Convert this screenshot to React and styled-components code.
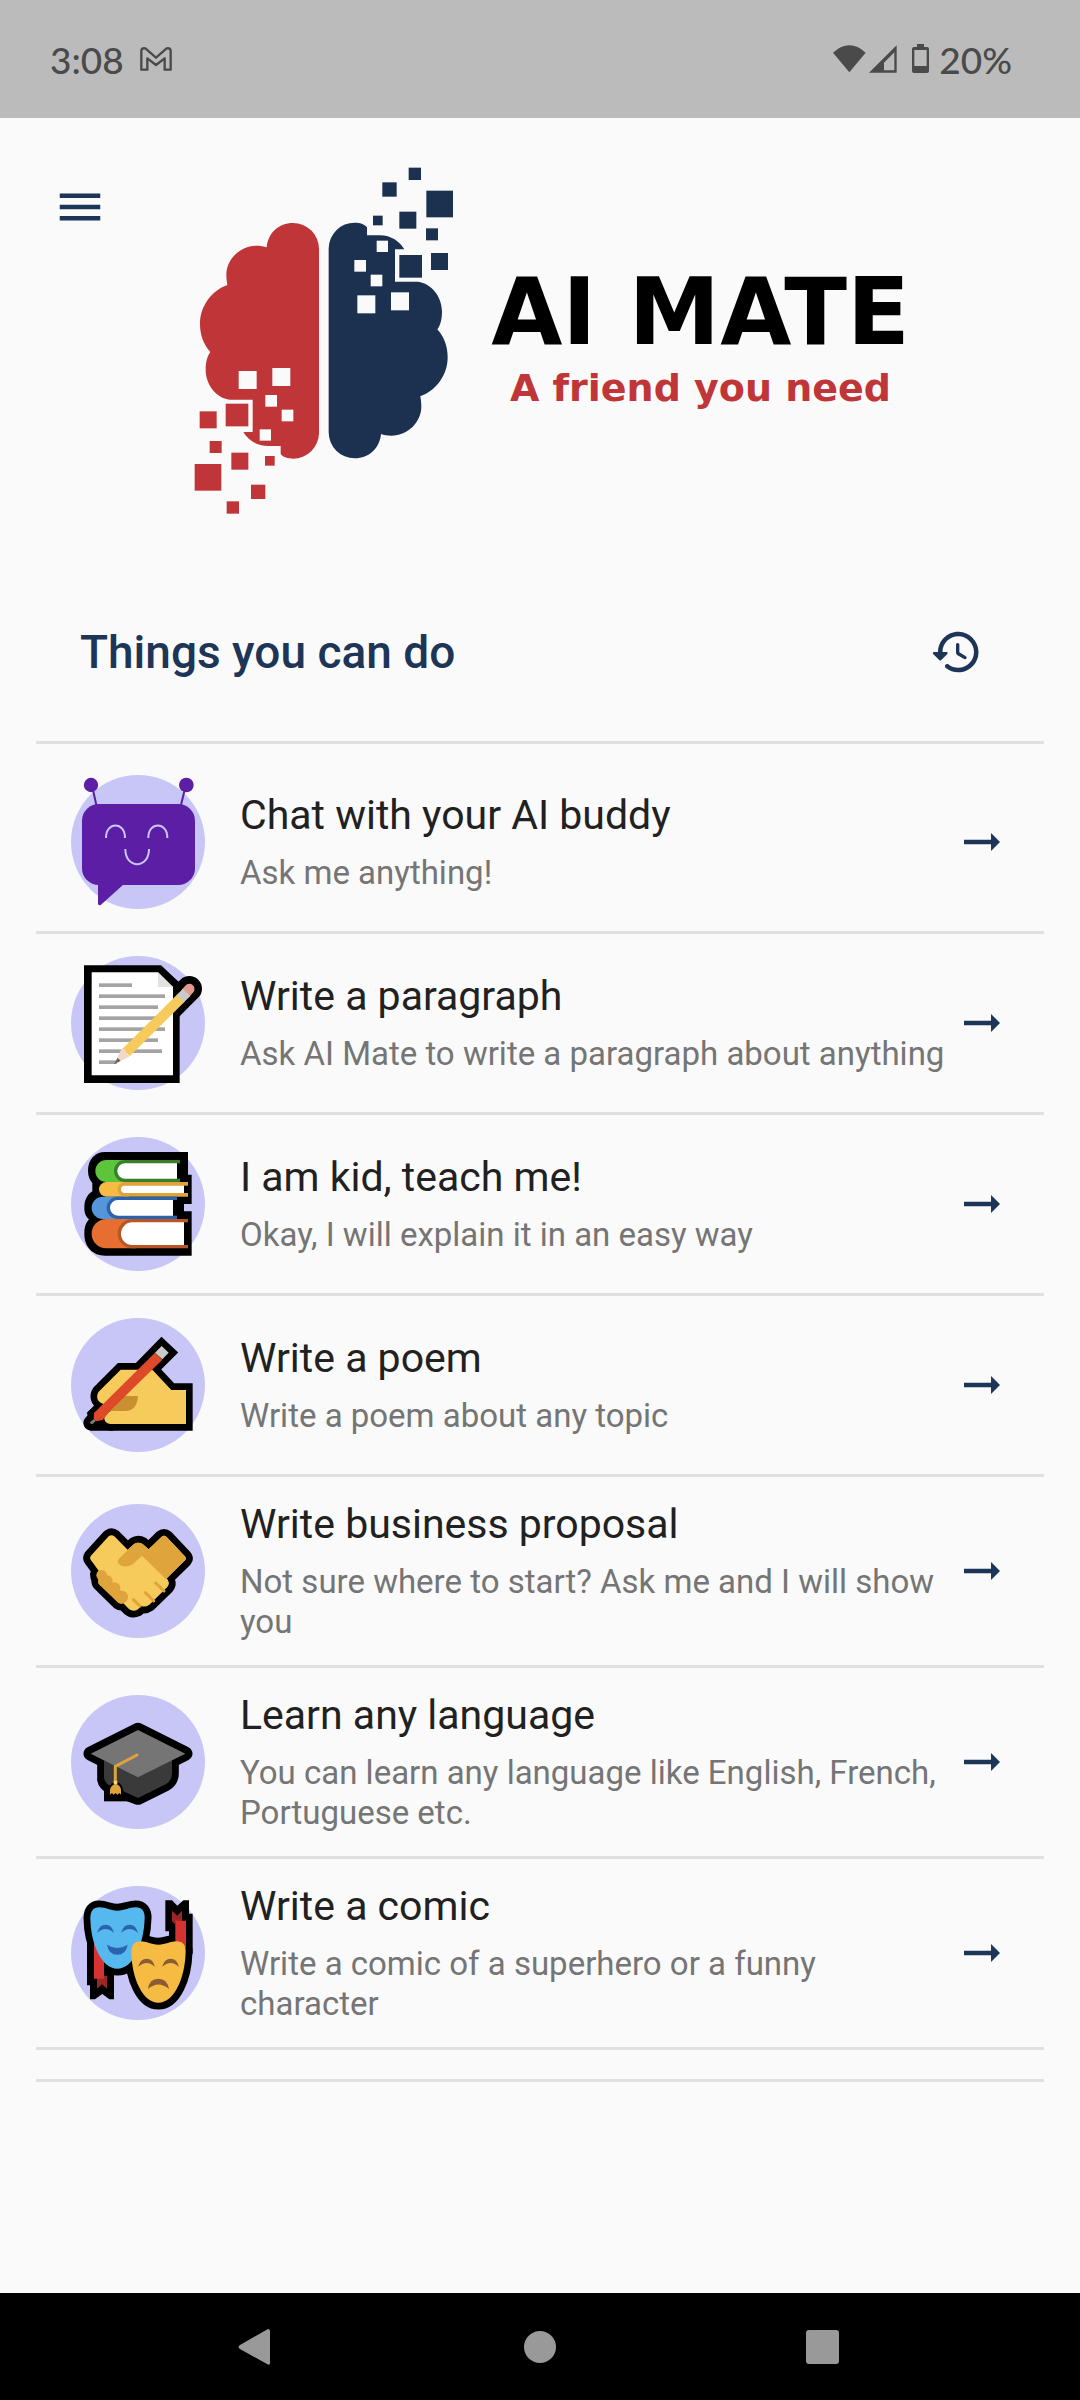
import React from "react";
import styled, { createGlobalStyle } from "styled-components";

const NAVY = "#1d3557";
const LOGO_NAVY = "#1c304f";
const LOGO_RED = "#c03537";

const GlobalStyle = createGlobalStyle`
  *, *::before, *::after { box-sizing: border-box; }
  body {
    margin: 0;
    background: #fafafa;
    font-family: Roboto, "Liberation Sans", sans-serif;
  }
  button {
    border: 0;
    padding: 0;
    background: none;
    color: inherit;
    font: inherit;
    cursor: pointer;
  }
  svg { display: block; flex: none; }
`;

const Screen = styled.div`
  display: flex;
  flex-direction: column;
  min-height: 100vh;
`;

const StatusBar = styled.div`
  display: flex;
  justify-content: space-between;
  align-items: center;
  height: 118px;
  padding: 0 68px 0 50px;
  background: #bbbbbb;
  color: #4a4a4a;
  font-family: Lato, "Liberation Sans", sans-serif;
  font-size: 37px;
  font-weight: 500;
`;

const StatusGroup = styled.div`
  display: flex;
  align-items: center;
  gap: ${(p) => p.$gap}px;
`;

const Main = styled.main`
  flex: 1;
`;

const Header = styled.header`
  display: flex;
  align-items: flex-start;
  padding: 47px 84px 0 53px;
`;

const IconButton = styled.button`
  display: flex;
  color: ${NAVY};
`;

const MenuButton = styled(IconButton)`
  margin-top: 15px;
`;

const Logo = styled.div`
  flex: 1;
  display: flex;
  justify-content: center;
  align-items: center;
  gap: 36px;
`;

const Wordmark = styled.div`
  display: flex;
  flex-direction: column;
  align-items: center;
  padding-bottom: 12px;
  white-space: nowrap;
`;

const BrandName = styled.h1`
  margin: 0;
  font: 700 92px/107px "DejaVu Sans", sans-serif;
  color: #000;
`;

const Tagline = styled.p`
  margin: 0;
  font: 700 38px/44px "DejaVu Sans", sans-serif;
  color: ${LOGO_RED};
`;

const SectionHead = styled.div`
  display: flex;
  justify-content: space-between;
  align-items: center;
  margin: 0 36px;
  padding: 108px 61px 60px 44px;
  border-bottom: 3px solid #e0e0e0;
`;

const SectionTitle = styled.h2`
  margin: 0;
  font-size: 46px;
  line-height: 58px;
  font-weight: 500;
  color: ${NAVY};
`;

const List = styled.ul`
  list-style: none;
  margin: 0 36px;
  padding: 9px 0 29px;
  border-bottom: 3px solid #e0e0e0;
`;

const Item = styled.li`
  border-bottom: 3px solid #e0e0e0;
`;

const ItemButton = styled.button`
  display: flex;
  align-items: center;
  width: 100%;
  padding: 22px 35px;
  text-align: left;
  color: ${NAVY};
`;

const ItemText = styled.span`
  flex: 1;
  min-width: 0;
  display: flex;
  flex-direction: column;
  gap: 14px;
  padding: 1px 0 1px 35px;
`;

const ItemTitle = styled.span`
  font-size: 41px;
  line-height: 48px;
  color: #212121;
`;

const ItemSubtitle = styled.span`
  font-size: 33px;
  line-height: 40px;
  color: #757575;
`;

const NavBar = styled.nav`
  display: flex;
  justify-content: center;
  align-items: center;
  gap: 248px;
  height: 107px;
  background: #000;
  color: #999;
`;

const NavButton = styled.button`
  display: flex;
  color: inherit;
`;

const NAVY_SQUARES = [
  [707, 53, 37], [628, 97, 43], [760, 122, 80], [600, 197, 29],
  [679, 185, 51], [759, 235, 36], [679, 315, 68], [774, 309, 51],
];
const CUTOUTS = [
  [611, 272, 34], [544, 330, 35], [593, 374, 35], [553, 436, 54], [654, 427, 54],
];

function BrainHalf({ color, transform }) {
  return (
    <g transform={transform}>
      <path
        fill={color}
        d="M467 295A78 78 0 0 1 545 218C560 218 574 222 582 232V256H620C655 256 680 275 694 298H666V395H735C775 400 807 440 807 485C807 505 803 525 793 538C814 562 824 590 824 622C824 675 790 722 742 739C744 750 745 760 745 770C745 815 705 857 655 857C643 857 632 855 624 852C620 895 588 925 545 925A78 78 0 0 1 467 847Z"
      />
      {NAVY_SQUARES.map(([x, y, s]) => (
        <rect key={`${x}-${y}`} x={x} y={y} width={s} height={s} fill={color} />
      ))}
      {CUTOUTS.map(([x, y, s]) => (
        <rect key={`${x}-${y}`} x={x} y={y} width={s} height={s} fill="#fafafa" />
      ))}
    </g>
  );
}

function BrainLogo() {
  return (
    <svg width="262" height="350" viewBox="60 45 786 1050" aria-hidden="true">
      <BrainHalf color={LOGO_NAVY} />
      <BrainHalf color={LOGO_RED} transform="rotate(180 452.5 572)" />
    </svg>
  );
}

function Avatar({ top, children }) {
  return (
    <svg width="134" height="134" viewBox={`63 ${top} 402 402`} aria-hidden="true">
      <circle cx="264" cy={top + 201} r="201" fill="#c7c6f7" />
      {children}
    </svg>
  );
}

function RobotIcon() {
  return (
    <Avatar top={75}>
      <g fill="#5c1ea4">
        <circle cx="123" cy="105" r="21.5" />
        <circle cx="409" cy="105" r="22" />
        <rect x="96" y="162" width="339" height="243" rx="50" />
        <path d="M144 395V462Q147 468 153 464L222 402Z" />
      </g>
      <path d="M129 120L139 165M404 120L393 165" stroke="#5c1ea4" strokeWidth="6" fill="none" />
      <path
        d="M168 264C167 214 226 214 225 264M295 264C294 214 353 214 352 264M226 297C226 358 297 358 297 297"
        stroke="#c7c6f7"
        strokeWidth="6"
        fill="none"
      />
    </Avatar>
  );
}

const PAPER_LINES = [246, 345, 324, 318, 345, 324, 336, 200];

function PaperIcon() {
  return (
    <Avatar top={620}>
      <path d="M102 648H333L389 700V1001H102Z" />
      <path d="M418 718L362 774" stroke="#000" strokeWidth="76" strokeLinecap="round" />
      <path d="M125 669H324L369 713V978H125Z" fill="#fff" />
      <path d="M324 669L369 713H324Z" fill="#e2e2e2" />
      {PAPER_LINES.map((end, i) => (
        <rect key={i} x="147" y={702 + i * 33} width={end - 147} height="11" fill="#a3a3a3" />
      ))}
      <path d="M408 730L418 719" stroke="#e39a8d" strokeWidth="31" strokeLinecap="round" />
      <path d="M228 910L393 746" stroke="#f6ca5b" strokeWidth="31" />
      <path d="M391 748L410 729" stroke="#cacaca" strokeWidth="31" />
      <path d="M216 897L226 902L229 912L238 922L212 935L201 925Z" fill="#f3d8c9" />
      <path d="M203 925L212 935L192 945Z" fill="#666" />
    </Avatar>
  );
}

function Book({ x, y, h, spine, end, light, dark, band, inset }) {
  const r = h / 2;
  const ph = h - band * 2;
  const pr = ph / 2;
  return (
    <>
      <path d={`M${x + r} ${y}H${spine + r + 12}V${y + h}H${x + r}A${r} ${r} 0 0 1 ${x + r} ${y}Z`} fill={light} />
      <path d={`M${spine + r} ${y}H${end}V${y + h}H${spine + r}A${r} ${r} 0 0 1 ${spine + r} ${y}Z`} fill={dark} />
      <path d={`M${end - inset} ${y + band}H${end}V${y + h - band}H${end - inset}Z`} />
      <path
        d={`M${spine + 10 + pr} ${y + band}H${end - inset}V${y + h - band}H${spine + 10 + pr}A${pr} ${pr} 0 0 1 ${spine + 10 + pr} ${y + band}Z`}
        fill="#fff"
      />
    </>
  );
}

function BooksIcon() {
  return (
    <Avatar top={84}>
      <path d="M165 129C135 129 114 152 114 185C114 202 120 214 127 222V247C110 258 103 275 103 296C103 312 107 322 117 331C107 342 103 355 103 375C103 415 130 440 165 440H425V307H402V285H425V197H414V129Z" />
      <Book x={136} y={153} h={66} spine={192} end={390} band={10} inset={9} light="#5dc43b" dark="#397f28" />
      <Book x={147} y={219} h={44} spine={203} end={414} band={11} inset={12} light="#f6bb42" dark="#dfa33b" />
      <Book x={125} y={263} h={67} spine={170} end={381} band={10} inset={12} light="#5595d9" dark="#2b63ae" />
      <Book x={125} y={330} h={88} spine={203} end={414} band={10} inset={12} light="#e76e31" dark="#b95626" />
    </Avatar>
  );
}

function WritingIcon() {
  const hand =
    "M212 782H307L364 843H408V945H182C155 943 155 908 182 906L158 884C140 878 138 860 146 848Z";
  return (
    <Avatar top={627}>
      <g stroke="#000" strokeWidth="40">
        <path d={hand} />
        <path d="M335 711L356 731L180 906L150 900Z" />
      </g>
      <path d="M122 965H190V885H140L112 910V920Q100 930 100 943Q102 963 122 965Z" />
      <path d={hand} fill="#f6ca5b" />
      <path d="M205 861H264Q262 905 225 906H182L160 890Z" fill="#c98f31" />
      <path d="M158 884L136 905L132 950H170Q158 930 166 915L182 906Z" />
      <path d="M315 731L337 752L180 906L158 933L138 937L131 930L132 912Z" fill="#dd4a2a" />
      <path d="M335 711L356 731L337 751L315 731Z" fill="#cacaca" />
      <path d="M120 939L132 930L137 936L128 945Q120 946 120 939Z" fill="#7a7a7a" />
    </Avatar>
  );
}

function HandshakeIcon() {
  const shape =
    "M176 173Q185 167 193 173L233 213L252 196Q264 188 278 196L296 212L334 175Q342 168 350 175L406 234Q410 239 406 244L350 299Q362 312 352 325L298 378Q285 387 275 382L262 393Q248 400 236 390L220 374Q212 377 205 372L147 315Q143 308 145 300Q136 288 146 276L122 243Q118 238 122 232Z";
  return (
    <Avatar top={76}>
      <path d={shape} stroke="#000" strokeWidth="41" strokeLinejoin="round" />
      <path d={shape} fill="#f6ca5b" />
      <path
        d="M207 240L252 196Q264 188 278 196L296 212L334 175Q342 168 350 175L406 234Q410 239 406 244L348 302L276 231L248 257Q226 270 207 257Q200 248 207 240Z"
        fill="#dfa43b"
      />
      <g fill="#dfa43b">
        <path d="M145 300V315L205 372L218 340L160 290Z" />
        <circle cx="155" cy="290" r="16" />
        <circle cx="172" cy="306" r="16" />
        <circle cx="194" cy="328" r="17" />
        <circle cx="215" cy="355" r="19" />
      </g>
      <path
        d="M317 313L342 337M286 342L311 367M250 363L270 382"
        stroke="#dfa43b"
        strokeWidth="9"
        strokeLinecap="round"
      />
    </Avatar>
  );
}

function CapIcon() {
  const board = "M264 751L406 822L264 893L122 822Z";
  return (
    <Avatar top={646}>
      <path d={board} stroke="#000" strokeWidth="43" strokeLinejoin="round" />
      <path
        d="M162 843V900Q165 915 185 925L264 955L347 914Q366 903 366 880V843Z"
        stroke="#000"
        strokeWidth="41"
        strokeLinejoin="round"
      />
      <path d="M162 900H240V965H162Z" />
      <path d="M162 843V895Q166 916 190 921L264 955L347 914Q366 903 366 880V843Z" fill="#3a3a3a" />
      <path d={board} fill="#757575" />
      <path d="M176 925Q184 907 197 907Q214 907 220 930V955H176Z" />
      <path d="M261 826L196 860V906" fill="none" stroke="#dfa33b" strokeWidth="9" strokeLinecap="round" />
      <path d="M191 903H202V915H191Z" fill="#fcd477" />
      <path d="M180 945V930Q184 915 197 914Q210 915 213 930V945L208 940L202 945L197 940L191 945L186 940Z" fill="#dfa33b" />
    </Avatar>
  );
}

function MasksIcon() {
  const mask =
    "M148 140C168 140 180 150 202 150C225 150 237 140 257 140C275 140 285 152 284 172C282 250 250 324 202 324C155 324 122 250 121 172C121 152 130 140 148 140Z";
  const eyes =
    "M141 217Q148 192 167 192Q186 192 192 217Q167 193 141 217ZM213 217Q220 192 239 192Q258 192 264 217Q239 193 213 217Z";
  return (
    <Avatar top={76}>
      <path d="M111 225V374H120V416H135L157 400L178 416H192V320Z" />
      <path d="M346 119H366L382 135L400 119H417V159H428V280L350 250L357 228V212H346Z" />
      <path d={mask} stroke="#000" strokeWidth="41" />
      <path d="M141 345H171V384L156 371L141 384Z" fill="#9c2525" />
      <path d="M132 245L162 290V354H132Z" fill="#d63232" />
      <path d="M366 150L382 165L396 150V185H376V192L366 181Z" fill="#9c2525" />
      <g transform="translate(123 102)">
        <path d={mask} stroke="#000" strokeWidth="41" />
      </g>
      <path d="M376 180H408V262L376 250Z" fill="#d63232" />
      <path d={mask} fill="#55b8ee" />
      <path d={eyes} fill="#2b63ae" />
      <path d="M171 252Q202 272 233 252Q228 282 202 282Q176 282 171 252Z" fill="#2b63ae" />
      <g transform="translate(123 102)">
        <path d={mask} fill="#f6bb42" />
        <path d={eyes} fill="#8c5a35" />
      </g>
      <path d="M294 385Q298 354 325 354Q352 354 357 385Q325 358 294 385Z" fill="#8c5a35" />
    </Avatar>
  );
}

const ITEMS = [
  { title: "Chat with your AI buddy", subtitle: "Ask me anything!", Icon: RobotIcon },
  { title: "Write a paragraph", subtitle: "Ask AI Mate to write a paragraph about anything", Icon: PaperIcon },
  { title: "I am kid, teach me!", subtitle: "Okay, I will explain it in an easy way", Icon: BooksIcon },
  { title: "Write a poem", subtitle: "Write a poem about any topic", Icon: WritingIcon },
  { title: "Write business proposal", subtitle: "Not sure where to start? Ask me and I will show you", Icon: HandshakeIcon },
  { title: "Learn any language", subtitle: "You can learn any language like English, French, Portuguese etc.", Icon: CapIcon },
  { title: "Write a comic", subtitle: "Write a comic of a superhero or a funny character", Icon: MasksIcon },
];

function MaterialIcon({ d }) {
  return (
    <svg width="54" height="54" viewBox="0 0 24 24" fill="currentColor" aria-hidden="true">
      <path d={d} />
    </svg>
  );
}

const MENU = "M3 18h18v-2H3v2zm0-5h18v-2H3v2zm0-7v2h18V6H3z";
const ARROW = "M16.01 11H4v2h12.01v3L20 12l-3.99-4v3z";
const HISTORY =
  "M13.26 3C8.17 2.86 4 6.95 4 12H2.21c-.45 0-.67.54-.35.85l2.79 2.8c.2.2.51.2.71 0l2.79-2.8c.31-.31.09-.85-.36-.85H6c0-3.9 3.18-7.05 7.1-7 3.72.05 6.85 3.18 6.9 6.9.05 3.91-3.1 7.1-7 7.1-1.61 0-3.1-.55-4.28-1.48-.4-.31-.96-.28-1.32.08-.42.43-.39 1.13.08 1.5C9.01 20.29 10.92 21 13 21c5.05 0 9.14-4.17 9-9.26-.13-4.69-4.05-8.61-8.74-8.74zm-.51 5c-.41 0-.75.34-.75.75v3.68c0 .35.19.68.49.86l3.12 1.85c.36.21.82.09 1.03-.26.21-.36.09-.82-.26-1.03l-2.88-1.71v-3.4c0-.4-.33-.74-.75-.74z";

export default function App() {
  return (
    <Screen>
      <GlobalStyle />
      <StatusBar>
        <StatusGroup $gap={16}>
          <span>3:08</span>
          <svg width="32" height="24" viewBox="0 0 96 72" fill="none" stroke="#4a4a4a" strokeWidth="7" strokeLinejoin="round" aria-hidden="true">
            <path d="M4 10V68H22V34L48 54L74 34V68H92V10Q90 2 80 4L48 32L16 4Q6 2 4 10Z" />
          </svg>
        </StatusGroup>
        <StatusGroup $gap={8}>
          <svg width="98" height="30" viewBox="0 0 294 90" fill="#4a4a4a" aria-hidden="true">
            <path d="M0 26Q49 -18 98 26L49 85Z" />
            <path fillRule="evenodd" d="M108 86L191 4V86ZM153 79H184V25L153 56Z" />
            <path fillRule="evenodd" d="M252 0H273V9H282Q288 9 288 15V81Q288 87 282 87H243Q237 87 237 81V15Q237 9 243 9H252ZM244 18V66H281V18Z" />
          </svg>
          <span>20%</span>
        </StatusGroup>
      </StatusBar>

      <Main>
        <Header>
          <MenuButton type="button" aria-label="Menu">
            <MaterialIcon d={MENU} />
          </MenuButton>
          <Logo>
            <BrainLogo />
            <Wordmark>
              <BrandName>AI MATE</BrandName>
              <Tagline>A friend you need</Tagline>
            </Wordmark>
          </Logo>
        </Header>

        <SectionHead>
          <SectionTitle>Things you can do</SectionTitle>
          <IconButton type="button" aria-label="History">
            <MaterialIcon d={HISTORY} />
          </IconButton>
        </SectionHead>

        <List>
          {ITEMS.map(({ title, subtitle, Icon }) => (
            <Item key={title}>
              <ItemButton type="button">
                <Icon />
                <ItemText>
                  <ItemTitle>{title}</ItemTitle>
                  <ItemSubtitle>{subtitle}</ItemSubtitle>
                </ItemText>
                <MaterialIcon d={ARROW} />
              </ItemButton>
            </Item>
          ))}
        </List>
      </Main>

      <NavBar>
        <NavButton type="button" aria-label="Back">
          <svg width="36" height="36" viewBox="0 0 36 36" fill="currentColor" aria-hidden="true">
            <path d="M30 0Q32 0 32 2V34Q32 37 29 35L2 20Q-1 18 2 16Z" />
          </svg>
        </NavButton>
        <NavButton type="button" aria-label="Home">
          <svg width="36" height="36" viewBox="0 0 36 36" fill="currentColor" aria-hidden="true">
            <circle cx="18" cy="18" r="16" />
          </svg>
        </NavButton>
        <NavButton type="button" aria-label="Recent apps">
          <svg width="36" height="36" viewBox="0 0 36 36" fill="currentColor" aria-hidden="true">
            <rect x="0" y="1" width="33" height="34" rx="3" />
          </svg>
        </NavButton>
      </NavBar>
    </Screen>
  );
}
